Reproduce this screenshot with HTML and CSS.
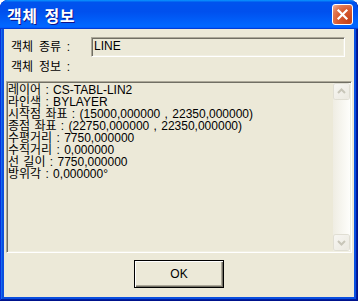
FILE: index.html
```html
<!DOCTYPE html>
<html lang="ko">
	<head>
		<title>객체 정보</title>
		<meta charset="utf-8">
		<link rel="stylesheet" href="styles.css">
	</head>
	<body>
		<div class="window">
			<div class="titlebar">
				<span class="title">객체 정보</span>
				<button class="close" aria-label="닫기">
					<svg width="19" height="19" viewBox="0 0 19 19"><path d="M5.5 5.5 L13.5 13.5 M13.5 5.5 L5.5 13.5" stroke="#fff" stroke-width="2.2" stroke-linecap="square"/></svg>
				</button>
			</div>
			<div class="client">
				<div class="row">
					<label class="label" for="kind">객체 종류 :</label>
					<div class="field" id="kind">LINE</div>
				</div>
				<div class="label info-label">객체 정보 :</div>
				<div class="listbox">
					<div class="lines">
						<div>레이어 : CS-TABL-LIN2</div>
						<div>라인색 : BYLAYER</div>
						<div>시작점 좌표 : (15000,000000 , 22350,000000)</div>
						<div>종점 좌표 : (22750,000000 , 22350,000000)</div>
						<div>수평거리 : 7750,000000</div>
						<div>수직거리 : 0,000000</div>
						<div>선 길이 : 7750,000000</div>
						<div>방위각 : 0,000000°</div>
					</div>
					<div class="scrollbar">
						<div class="arrow">
							<svg width="15" height="15" viewBox="0 0 15 15"><path d="M4 9 L7.5 5.5 L11 9" fill="none" stroke="#c8c6b9" stroke-width="2"/></svg>
						</div>
						<div class="track"></div>
						<div class="arrow">
							<svg width="15" height="15" viewBox="0 0 15 15"><path d="M4 6 L7.5 9.5 L11 6" fill="none" stroke="#c8c6b9" stroke-width="2"/></svg>
						</div>
					</div>
				</div>
				<div class="buttons">
					<button class="ok">OK</button>
				</div>
			</div>
		</div>
	</body>
</html>
```
FILE: styles.css
```css
body {
	margin: 0;
	background-color: #FFFFFF;
	font-family: 'Liberation Sans', 'Noto Sans CJK KR', sans-serif;
	font-size: 12px;
	color: #000000;
}

.window {
	display: flex;
	flex-direction: column;
	width: 358px;
	height: 301px;
	background-color: #0a4fe0;
	border-radius: 8px 8px 0 0;
	box-shadow: inset -1px -1px #00138c, inset 1px 0 #0831d9, inset -2px -2px #001ea0, inset 2px 0 #166aee;
	overflow: hidden;
}
.titlebar {
	flex: 0 0 auto;
	display: flex;
	align-items: center;
	height: 29px;
	padding: 0 5px 0 7px;
	box-sizing: border-box;
	background: linear-gradient(180deg, #0997ff, #0053ee 8%, #0050ee 40%, #0066ff 88%, #0066ff 93%, #005bff 95%, #003dd7 96%, #003dd7);
	border-radius: 8px 8px 0 0;
}
.title {
	flex: 1 1 auto;
	color: #FFFFFF;
	font-family: 'Noto Sans CJK KR', sans-serif;
	font-weight: 700;
	font-size: 16px;
	line-height: 17px;
	letter-spacing: 0.5px;
	word-spacing: 2px;
	text-shadow: 1px 1px #0f1089;
	margin-top: 1px;
}
.close {
	display: flex;
	align-items: center;
	justify-content: center;
	width: 21px;
	height: 21px;
	padding: 0;
	border: 1px solid #FFFFFF;
	border-radius: 3px;
	background: radial-gradient(circle at 85% 85%, #c4421a 0, #d85a30 50%, #e07a55 75%, #f3b59c 100%);
}

.client {
	flex: 1 1 auto;
	display: flex;
	flex-direction: column;
	margin: 0 4px 4px;
	padding-top: 8px;
	background-color: #ece9d8;
}
.row {
	display: flex;
	align-items: center;
	height: 20px;
	padding-left: 7px;
}
.label {
	width: 80px;
	line-height: 12px;
	word-spacing: 2.5px;
}
.field {
	width: 254px;
	height: 20px;
	box-sizing: border-box;
	padding: 0 2px;
	line-height: 17px;
	border: 1px solid;
	border-color: #aca899 #FFFFFF #FFFFFF #aca899;
	box-shadow: inset 1px 1px #716f64, inset -1px -1px #f1efe2;
}
.info-label {
	height: 12px;
	margin: 4px 0 8px 7px;
}

.listbox {
	display: flex;
	height: 172px;
	margin: 0 2px;
	box-sizing: border-box;
	border: 1px solid;
	border-color: #aca899 #FFFFFF #FFFFFF #aca899;
	box-shadow: inset 1px 1px #716f64, inset -1px -1px #f1efe2;
}
.lines {
	flex: 1 1 auto;
	padding: 2px 0 0 1px;
	line-height: 12px;
	word-spacing: 1px;
	white-space: nowrap;
	overflow: hidden;
}
.scrollbar {
	flex: 0 0 17px;
	display: flex;
	flex-direction: column;
	margin: 1px 1px 1px 0;
	background: linear-gradient(90deg, #efede3, #fefefb);
}
.arrow {
	display: flex;
	align-items: center;
	justify-content: center;
	width: 15px;
	height: 15px;
	margin: 1px;
	border-radius: 2px;
	background: linear-gradient(135deg, #f7f6f2, #ebe9e0);
	box-shadow: 0 0 0 1px #e0ded3;
}
.track {
	flex: 1 1 auto;
}

.buttons {
	display: flex;
	justify-content: center;
	margin-top: 7px;
}
.ok {
	width: 90px;
	height: 28px;
	padding: 0;
	border: 1px solid #000000;
	background-color: #ece9d8;
	box-shadow: inset 1px 1px #FFFFFF, inset -1px -1px #716f64, inset -2px -2px #aca899;
	font-family: inherit;
	font-size: 12px;
	color: #000000;
}
```
